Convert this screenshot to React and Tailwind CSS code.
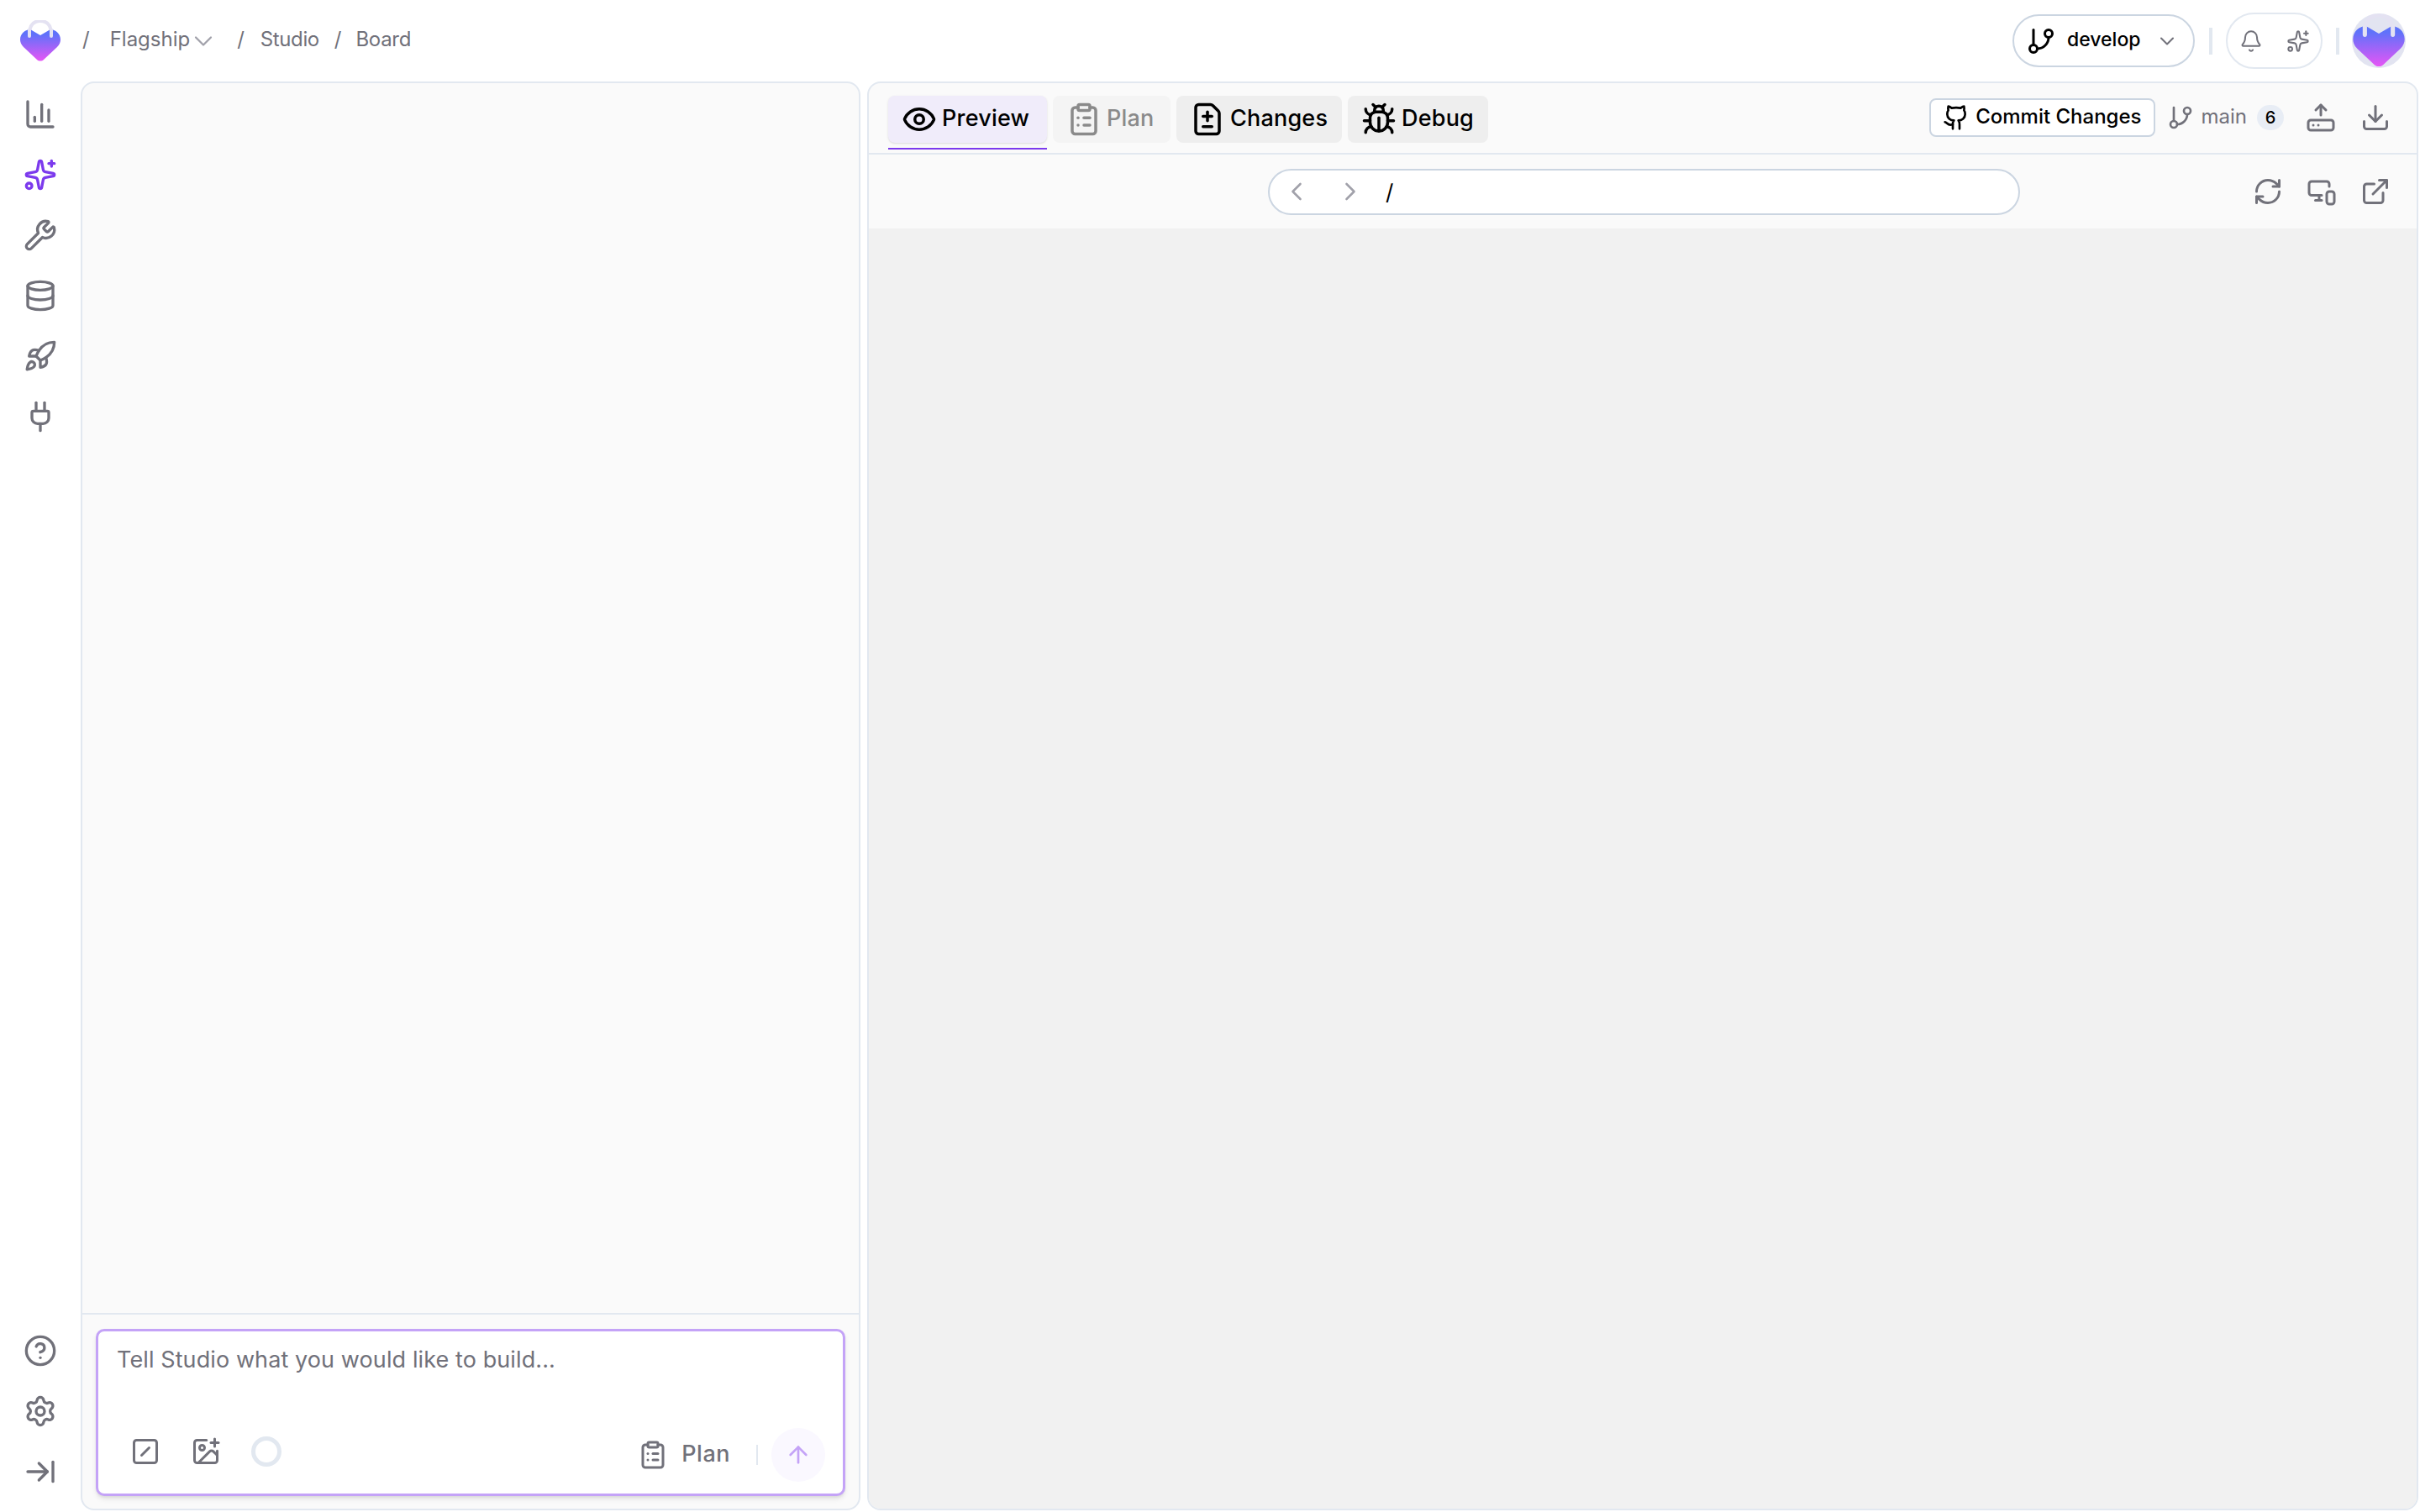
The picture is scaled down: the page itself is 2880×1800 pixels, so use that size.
import React from "react";
import {
  ArrowRightToLine,
  ArrowUp,
  Bell,
  Bug,
  ChartColumn,
  ChevronDown,
  ChevronLeft,
  ChevronRight,
  CircleHelp,
  ClipboardList,
  Database,
  Download,
  ExternalLink,
  Eye,
  FileDiff,
  GitBranch,
  Github,
  HardDriveUpload,
  ImagePlus,
  MonitorSmartphone,
  Plug,
  RefreshCw,
  Rocket,
  Settings,
  Sparkles,
  SquareSlash,
  Wrench,
} from "lucide-react";

const Logo = ({ id, className }) => (
  <svg viewBox="0 0 48 50" className={className}>
    <defs>
      <linearGradient id={id} x1="0" y1="0" x2="0" y2="1">
        <stop offset="0.15" stopColor="#5f72fa" />
        <stop offset="1" stopColor="#e655f5" />
      </linearGradient>
    </defs>
    <path d="M11 17C11 6 16 1 24 1s13 5 13 16" fill="none" stroke="#e4e2f2" strokeWidth="4" />
    <path
      d="M12 11l12 7 12-7c6 0 12 5 12 12 0 3-1 6-4 9L28 47c-2 2-6 2-8 0L4 32c-3-3-4-6-4-9 0-7 6-12 12-12z"
      fill={`url(#${id})`}
    />
    <path d="M9 11.500a2 2 0 0 1 4 0V19a2 2 0 0 1-4 0zM35 11.500a2 2 0 0 1 4 0V19a2 2 0 0 1-4 0z" fill="#e4e2f2" />
  </svg>
);

const railTop = [
  { icon: ChartColumn, color: "text-[#71717a]" },
  { icon: Sparkles, color: "text-[#7c3aed]" },
  { icon: Wrench, color: "text-[#71717a]" },
  { icon: Database, color: "text-[#71717a]" },
  { icon: Rocket, color: "text-[#71717a]" },
  { icon: Plug, color: "text-[#71717a]" },
];

const railBottom = [CircleHelp, Settings, ArrowRightToLine];

const tabs = [
  { label: "Preview", icon: Eye, className: "w-[189px] bg-[#f0ecfa] text-black shadow-sm" },
  { label: "Plan", icon: ClipboardList, className: "w-[140px] bg-[#f4f4f4] text-[#8a8a8a]" },
  { label: "Changes", icon: FileDiff, className: "w-[197px] bg-[#eeeeee] text-black" },
  { label: "Debug", icon: Bug, className: "w-[167px] bg-[#eeeeee] text-black" },
];

export default function App() {
  return (
    <div className="flex h-screen w-screen flex-col bg-white font-['Inter',sans-serif] text-[#71717a]">
      {/* Top bar */}
      <header className="flex h-[97px] shrink-0 items-center pl-[24px] pr-[17px] text-[24px]">
        <Logo id="logo-a" className="h-[50px] w-[48px]" />
        <span className="ml-[26px] pb-[4px]">/</span>
        <span className="ml-[24px] pb-[4px]">Flagship</span>
        <ChevronDown size={36} strokeWidth={1.5} className="-ml-[2px] text-[#a1a1aa]" />
        <span className="ml-[22px] pb-[4px]">/</span>
        <span className="ml-[19px] pb-[4px] tracking-[-0.4px]">Studio</span>
        <span className="ml-[18px] pb-[4px]">/</span>
        <span className="ml-[17px] pb-[4px] tracking-[-0.3px]">Board</span>

        <div className="ml-auto flex h-[63px] w-[217px] items-center rounded-full border-2 border-[#cbd5e1] pl-[14px] text-black">
          <GitBranch size={36} strokeWidth={2} />
          <span className="ml-[13px] pb-[2px] text-[23px] font-medium">develop</span>
          <ChevronDown size={28} strokeWidth={1.75} className="ml-[17px] text-[#71717a]" />
        </div>
        <div className="ml-[17px] h-[32px] w-[4px] bg-[#e2e8f0]" />
        <div className="ml-[16px] flex h-[67px] w-[115px] items-center justify-center gap-[28px] rounded-full border-2 border-[#e2e8f0]">
          <Bell size={28} strokeWidth={1.75} />
          <Sparkles size={28} strokeWidth={1.75} />
        </div>
        <div className="ml-[16px] h-[32px] w-[4px] bg-[#e2e8f0]" />
        <div className="ml-[15px] flex h-[65px] w-[64px] items-center justify-center overflow-hidden rounded-full bg-[#e2e4f1]">
          <Logo id="logo-b" className="h-[64px] w-[64px]" />
        </div>
      </header>

      <div className="flex min-h-0 flex-1 pb-[2px] pr-[2px]">
        {/* Left rail */}
        <nav className="flex w-[96px] shrink-0 flex-col items-center justify-between pb-[26px] pt-[19px]">
          <div className="flex flex-col gap-[32px]">
            {railTop.map((item, i) => (
              <item.icon key={i} size={40} strokeWidth={2} className={item.color} />
            ))}
          </div>
          <div className="flex flex-col gap-[32px]">
            {railBottom.map((Icon, i) => (
              <Icon key={i} size={40} strokeWidth={2} className="text-[#71717a]" />
            ))}
          </div>
        </nav>

        {/* Chat panel */}
        <section className="flex w-[928px] shrink-0 flex-col overflow-hidden rounded-[16px] border-2 border-[#e2e8f0] bg-[#fafafa]">
          <div className="flex-1" />
          <div className="border-t-2 border-[#e2e8f0] px-[16px] pb-[15px] pt-[17px]">
            <div className="flex h-[199px] flex-col justify-between rounded-[10px] border-[3px] border-[#c4a3f7] bg-white pb-[14px] pl-[22px] pr-[21px] pt-[17px] shadow-md">
              <p className="text-[27px] leading-[34px] tracking-[0.1px] text-[#71717a]">Tell Studio what you would like to build...</p>
              <div className="flex items-center">
                <div className="mb-[8px] ml-[16px] flex items-center">
                  <SquareSlash size={36} strokeWidth={2} />
                  <ImagePlus size={36} strokeWidth={2} className="ml-[36px]" />
                  <div className="ml-[36px] h-[36px] w-[36px] rounded-full border-[5px] border-[#e2e8f0]" />
                </div>
                <ClipboardList size={36} strokeWidth={2} className="ml-auto" />
                <span className="ml-[16px] pb-[2px] text-[27px] font-medium tracking-[0.5px]">Plan</span>
                <div className="ml-[31px] h-[24px] w-[2px] bg-[#e2e8f0]" />
                <div className="ml-[16px] flex h-[64px] w-[64px] items-center justify-center rounded-full bg-[#faf8ff]">
                  <ArrowUp size={32} strokeWidth={2} className="text-[#c4a3f7]" />
                </div>
              </div>
            </div>
          </div>
        </section>

        {/* Preview panel */}
        <section className="ml-[8px] flex min-w-0 flex-1 flex-col overflow-hidden rounded-[16px] border-2 border-[#e2e8f0] bg-[#fafafa]">
          <div className="flex h-[85px] shrink-0 items-start border-b-2 border-[#e2e8f0] pl-[23px] pr-[31px] pt-[15px]">
            <div className="flex gap-[7px]">
              {tabs.map((tab) => (
                <div
                  key={tab.label}
                  className={`relative flex h-[56px] items-center gap-[6px] rounded-[8px] pl-[16px] text-[27px] font-medium tracking-[0.2px] ${tab.className}`}
                >
                  <tab.icon size={42} strokeWidth={2} />
                  <span className="pb-[2px]">{tab.label}</span>
                  {tab.label === "Preview" && (
                    <div className="absolute -bottom-[8px] left-0 right-0 h-[2px] bg-[#7c3aed]" />
                  )}
                </div>
              ))}
            </div>
            <div className="ml-auto flex items-center pt-[3px]">
              <div className="flex h-[46px] items-center gap-[7px] rounded-[8px] border-2 border-[#cbd5e1] bg-white pl-[14px] pr-[14px] text-[24px] font-medium text-black">
                <Github size={32} strokeWidth={2} />
                <span className="pb-[2px]">Commit Changes</span>
              </div>
              <GitBranch size={32} strokeWidth={2} className="ml-[14px]" />
              <span className="ml-[9px] pb-[2px] text-[24px]">main</span>
              <div className="ml-[12px] flex h-[30px] w-[32px] items-center justify-center rounded-full bg-[#e8edf5] text-[20px] font-medium text-black">
                6
              </div>
              <HardDriveUpload size={36} strokeWidth={2} className="ml-[26px]" />
              <Download size={36} strokeWidth={2} className="ml-[29px]" />
            </div>
          </div>

          <div className="flex h-[88px] shrink-0 items-center pl-[475px] pr-[31px]">
            <div className="flex h-[55px] w-[895px] items-center rounded-full border-2 border-[#cbd5e1] bg-white pl-[14px] text-black">
              <ChevronLeft size={36} strokeWidth={1.75} className="text-[#a1a1aa]" />
              <ChevronRight size={36} strokeWidth={1.75} className="ml-[28px] text-[#a1a1aa]" />
              <span className="ml-[24px] text-[26px]">/</span>
            </div>
            <div className="ml-auto flex gap-[28px]">
              <RefreshCw size={36} strokeWidth={2} />
              <MonitorSmartphone size={36} strokeWidth={2} />
              <ExternalLink size={36} strokeWidth={2} />
            </div>
          </div>

          <div className="flex-1 bg-[#f1f1f1]" />
        </section>
      </div>
    </div>
  );
}
